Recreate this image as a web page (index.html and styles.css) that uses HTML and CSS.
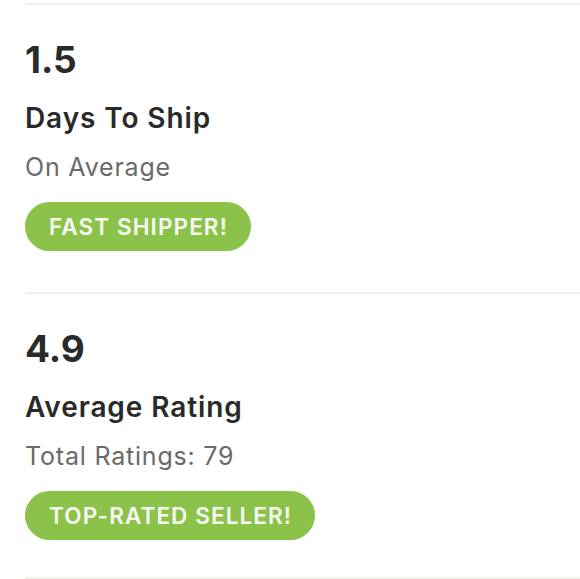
FILE: index.html
```html
<!DOCTYPE html>
<html>
<head>
<meta charset="utf-8">
<link rel="stylesheet" href="styles.css">
</head>
<body>
<div class="stats">
  <section class="stat">
    <div class="value">1.5</div>
    <div class="title">Days To Ship</div>
    <div class="sub">On Average</div>
    <span class="badge">FAST SHIPPER!</span>
  </section>
  <section class="stat">
    <div class="value">4.9</div>
    <div class="title">Average Rating</div>
    <div class="sub">Total Ratings: 79</div>
    <span class="badge">TOP-RATED SELLER!</span>
  </section>
</div>
</body>
</html>
```
FILE: styles.css
```css
html, body {
  margin: 0;
  padding: 0;
  background: #ffffff;
}
body {
  font-family: Inter, "Open Sans", sans-serif;
  color: #2a2a2a;
  padding-top: 3px;
}
.stats {
  margin-left: 25px;
  border-bottom: 2px solid #f1f0ec;
}
.stat {
  border-top: 2px solid #f1f0ec;
  padding: 32px 0 41px 0;
  display: flex;
  flex-direction: column;
  align-items: flex-start;
}
.stat:last-child {
  padding-bottom: 37px;
}
.value {
  font-size: 37px;
  font-weight: 700;
  line-height: 46px;
}
.title {
  margin-top: 18px;
  font-size: 28px;
  font-weight: 600;
  line-height: 34px;
  letter-spacing: 0.9px;
}
.sub {
  margin-top: 17px;
  font-size: 25px;
  font-weight: 400;
  line-height: 31px;
  letter-spacing: 0.8px;
  color: #6a6a6a;
}
.badge {
  margin-top: 19px;
  height: 49px;
  box-sizing: border-box;
  padding: 0 23px 0 24px;
  border-radius: 25px;
  background: #8bc34a;
  color: #f7f9f2;
  font-size: 22.5px;
  font-weight: 600;
  letter-spacing: 1.1px;
  display: flex;
  align-items: center;
}
```
